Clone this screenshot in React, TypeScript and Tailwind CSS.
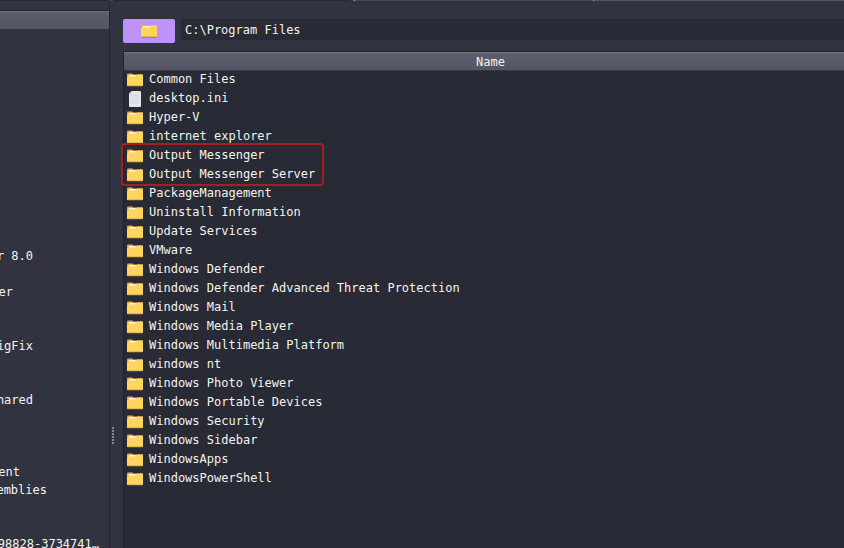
const files = [
  'Common Files', 'desktop.ini', 'Hyper-V', 'internet explorer', 'Output Messenger',
  'Output Messenger Server', 'PackageManagement', 'Uninstall Information', 'Update Services',
  'VMware', 'Windows Defender', 'Windows Defender Advanced Threat Protection', 'Windows Mail',
  'Windows Media Player', 'Windows Multimedia Platform', 'windows nt', 'Windows Photo Viewer',
  'Windows Portable Devices', 'Windows Security', 'Windows Sidebar', 'WindowsApps', 'WindowsPowerShell',
];

// Clipped tree labels: each one ends at the given column width.
const treeRows = [
  { text: 'r 8.0', box: 'w-[33px]' },
  { text: '', box: 'w-0' },
  { text: 'er', box: 'w-[13px]' },
  { text: '', box: 'w-0' },
  { text: '', box: 'w-0' },
  { text: 'igFix', box: 'w-[33px]' },
  { text: '', box: 'w-0' },
  { text: '', box: 'w-0' },
  { text: 'hared', box: 'w-[33px]' },
  { text: '', box: 'w-0' },
  { text: '', box: 'w-0' },
  { text: '', box: 'w-0' },
  { text: 'ent', box: 'w-[20px]' },
  { text: 'emblies', box: 'w-[47px]' },
  { text: '', box: 'w-0' },
  { text: '', box: 'w-0' },
  { text: '98828-3734741…', box: 'w-[99px]' },
];

function FolderIcon() {
  return (
    <svg width="16" height="14" viewBox="0 0 16 14" className="shrink-0">
      <path d="M0 1.6Q0 .6 1 .6h4.3q.5 0 .8.9H10V5H0z" fill="#e5a63c" />
      <path d="M1.6 1.9h9v2h-9z" fill="#f8f1de" />
      <path d="M0 4.6q0-.8.8-.8h6.4q.7 0 1.2-.6l1.2-1.3q.4-.6 1.1-.6h4.5q.8 0 .8.8V12.4q0 .6-.6.6H.6Q0 13 0 12.4z" fill="#ffd45f" />
      <path d="M.4 12.8h15.2q-.1.6-.6.6H1q-.5 0-.6-.6z" fill="#8a6a38" />
    </svg>
  );
}

function FileIcon() {
  return (
    <svg width="16" height="16" viewBox="0 0 16 16" className="shrink-0">
      <path d="M4.5 0H13q1 0 1 1v14q0 1-1 1H3q-1 0-1-1V2.5z" fill="#e2e6e8" />
      <path d="M2 3h2.5V0z" fill="#bfc6ca" />
      <path d="M4 4.5h8M4 6.5h8M4 8.5h8M4 10.5h8M4 12.5h6" stroke="#d3d8db" strokeWidth="1" />
    </svg>
  );
}

function Tree() {
  return (
    <aside className="flex h-full w-[110px] shrink-0 flex-col overflow-hidden border-r border-[#262732] pt-[9px]">
      <div className="h-5 shrink-0 border-t border-[#22232e]">
        <div className="h-[18px] border-t border-[#73747f] bg-linear-to-b from-[#5c5d6d] to-[#545564]" />
      </div>
      <div className="mt-[217px] flex shrink-0 flex-col">
        {treeRows.map((row, i) => (
          <div key={i} className={`flex h-[18px] shrink-0 justify-end overflow-hidden leading-[18px] whitespace-pre ${row.box}`}>
            <span className="shrink-0">{row.text}</span>
          </div>
        ))}
      </div>
    </aside>
  );
}

function Splitter() {
  return (
    <div className="flex w-[13px] shrink-0 flex-col gap-px pt-[426px] pl-[2px]">
      {[0, 1, 2, 3, 4, 5].map((i) => (
        <div key={i} className="h-[2px] w-[2px] shrink-0 bg-[#858690]" />
      ))}
    </div>
  );
}

export default function App() {
  return (
    <div className="flex h-[548px] w-[844px] flex-col overflow-hidden bg-[#323341] font-['DejaVu_Sans_Mono',monospace] text-[12px] text-[#f4f4ee]">
      <div className="flex h-px shrink-0">
        <div className="w-[109px] bg-[#292a35]" />
        <div className="w-1 bg-[#484957]" />
        <div className="w-[238px] bg-[#292a35]" />
        <div className="w-[3px] bg-[#424350]" />
        <div className="w-px bg-[#ff79c6]" />
        <div className="w-[238px] bg-[#45485f]" />
        <div className="w-px bg-[#ff79c6]" />
        <div className="flex-1 bg-[#545661]" />
      </div>
      <div className="flex min-h-0 flex-1">
        <Tree />
        <Splitter />
        <main className="flex min-w-0 flex-1 flex-col pt-[18px]">
          <div className="flex h-8 shrink-0 items-start gap-[6px]">
            <button className="flex h-6 w-[52px] shrink-0 items-center justify-center rounded-[2px] bg-[#bd93f9]">
              <FolderIcon />
            </button>
            <div className="h-[21px] flex-1 bg-[#282a35] pl-1 leading-[22px]">C:\Program Files</div>
          </div>
          <section className="relative flex min-h-0 flex-1 flex-col border-t border-l border-[#20212c] bg-[#282a35]">
            <header className="h-[19px] shrink-0 border-t border-b border-t-[#73747f] border-b-[#373844] bg-linear-to-b from-[#5c5d6d] to-[#545564] pl-[13px] text-center leading-[18px]">Name</header>
            <ul className="-mt-px flex flex-col">
              {files.map((name) => (
                <li key={name} className="flex h-[19px] items-center gap-[6px] pl-[3px]">
                  <span className="flex h-[19px] items-center pt-px">{name === 'desktop.ini' ? <FileIcon /> : <FolderIcon />}</span>
                  <span className="leading-[17px] whitespace-pre">{name}</span>
                </li>
              ))}
            </ul>
            <div className="absolute top-[91px] left-[-3px] h-[43px] w-[203px] rounded-[4px] border-2 border-[#a1211f]" />
          </section>
        </main>
      </div>
    </div>
  );
}
